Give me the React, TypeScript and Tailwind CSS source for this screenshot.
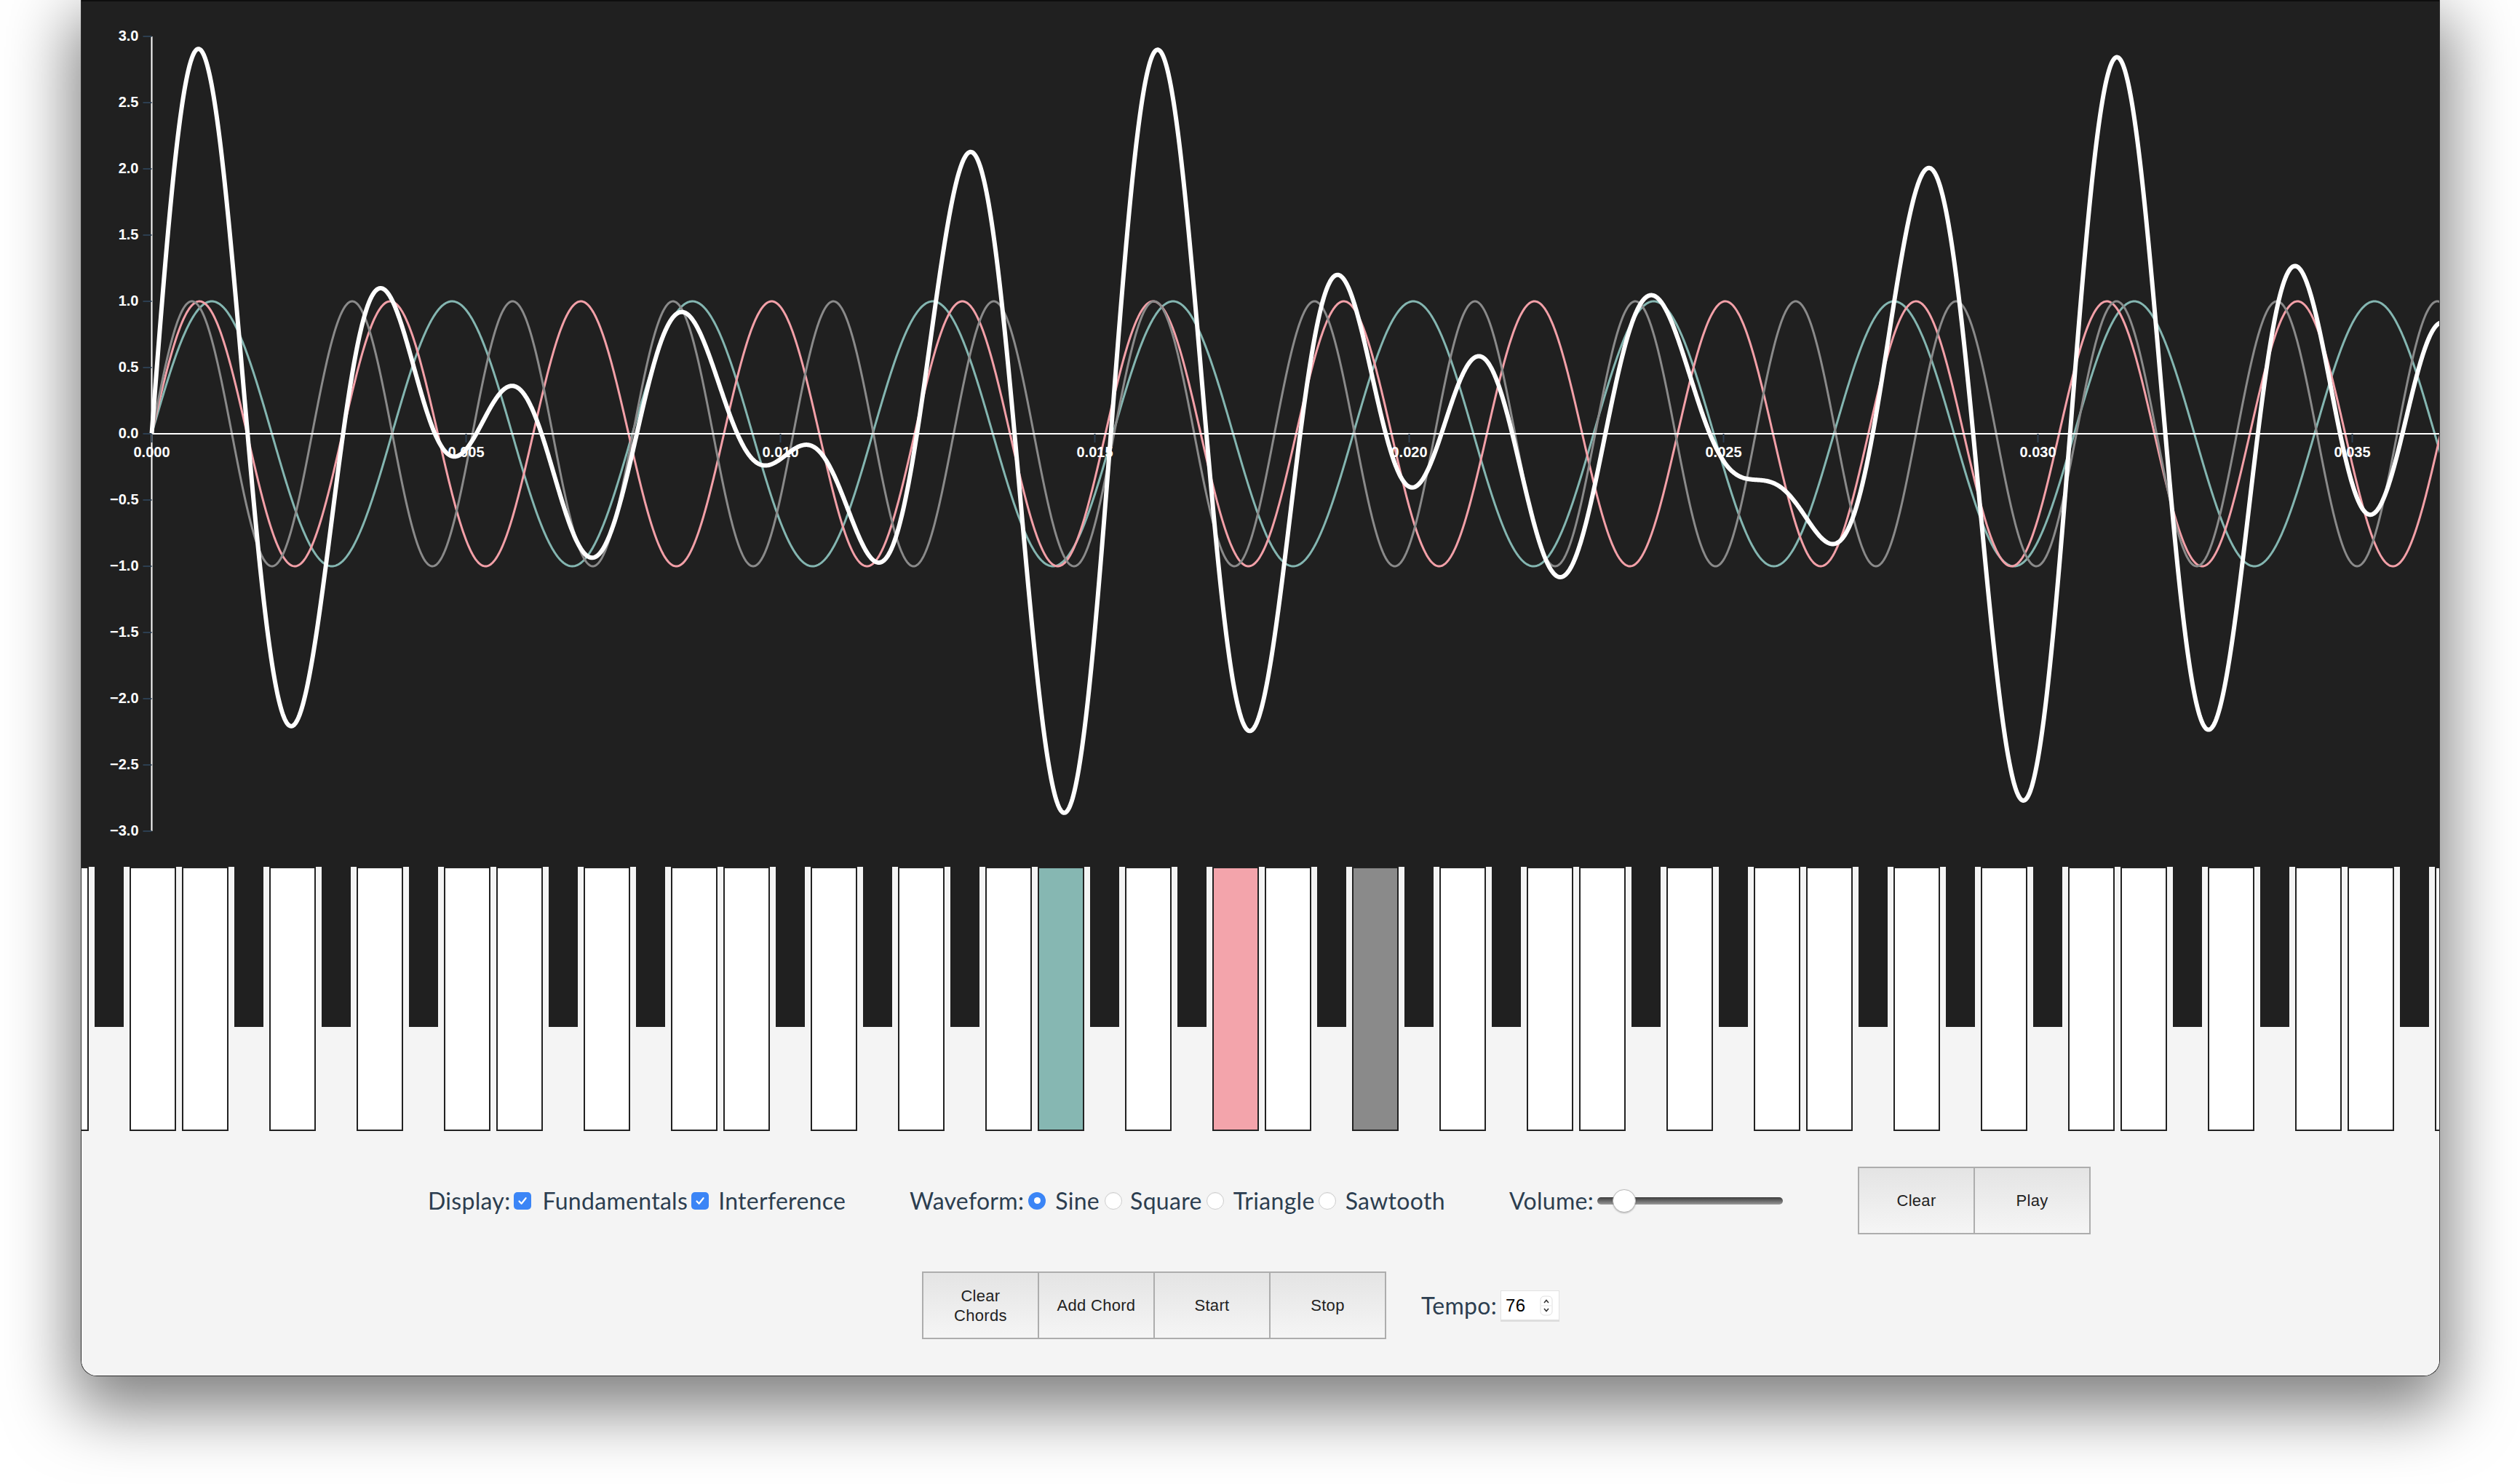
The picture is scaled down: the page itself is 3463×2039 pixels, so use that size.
import React from "react";

// chord being shown: C4, E4, G4
const NOTES = [
  { freq: 261.63, color: "#84b6b1" },
  { freq: 329.63, color: "#f3a0a8" },
  { freq: 392.0, color: "#8a8a8a" },
];

const CHART_W = 3240;
const CHART_H = 1191;
const X0 = 96.5;
const Y0 = 596;
const PX_PER_SEC = 86400;
const PX_PER_UNIT = 182;

const toX = (t: number) => X0 + t * PX_PER_SEC;
const toY = (v: number) => Y0 - v * PX_PER_UNIT;

const buildPath = (fn: (t: number) => number) => {
  let d = "";
  for (let px = 0; px <= CHART_W - X0 + 4; px += 1) {
    const t = px / PX_PER_SEC;
    d += `${px === 0 ? "M" : "L"}${(X0 + px).toFixed(1)},${toY(fn(t)).toFixed(2)}`;
  }
  return d;
};

const sine = (f: number) => (t: number) => Math.sin(2 * Math.PI * f * t);

const yTicks = Array.from({ length: 13 }, (_, i) => 3 - i * 0.5);
const xTicks = [0, 0.005, 0.01, 0.015, 0.02, 0.025, 0.03, 0.035];

const fmtY = (v: number) => (v < 0 ? "\u2212" + Math.abs(v).toFixed(1) : v.toFixed(1));

const Chart = () => {
  const fundamentals = NOTES.map((n) => buildPath(sine(n.freq)));
  const interference = buildPath((t) =>
    NOTES.reduce((sum, n) => sum + Math.sin(2 * Math.PI * n.freq * t), 0)
  );

  return (
    <svg width={CHART_W} height={CHART_H} className="block bg-[#202020]">
      <rect x={0} y={0} width={CHART_W} height={2} fill="#0e0e0e" />
      {fundamentals.map((d, i) => (
        <path key={i} d={d} fill="none" stroke={NOTES[i].color} strokeWidth={3} />
      ))}
      <path
        d={interference}
        fill="none"
        stroke="#ffffff"
        strokeWidth={6}
        strokeLinejoin="round"
      />

      {/* y axis */}
      <line x1={X0} y1={toY(3)} x2={X0} y2={toY(-3)} stroke="#fff" strokeWidth={2} />
      {yTicks.map((v) => (
        <g key={v}>
          <line x1={X0 - 12} y1={toY(v)} x2={X0} y2={toY(v)} stroke="#2c3e50" strokeWidth={2} />
          <text
            x={X0 - 18}
            y={toY(v)}
            dy="0.32em"
            textAnchor="end"
            fill="#fff"
            fontSize={20}
            fontWeight="bold"
            fontFamily="'Liberation Sans', Arial, sans-serif"
          >
            {fmtY(v)}
          </text>
        </g>
      ))}

      {/* x axis */}
      <line x1={X0} y1={Y0} x2={CHART_W} y2={Y0} stroke="#fff" strokeWidth={2} />
      {xTicks.map((t) => (
        <g key={t}>
          <line x1={toX(t)} y1={Y0} x2={toX(t)} y2={Y0 + 12} stroke="#2c3e50" strokeWidth={2} />
          <text
            x={toX(t)}
            y={Y0 + 18}
            dy="0.71em"
            textAnchor="middle"
            fill="#fff"
            fontSize={20}
            fontWeight="bold"
            fontFamily="'Liberation Sans', Arial, sans-serif"
          >
            {t.toFixed(3)}
          </text>
        </g>
      ))}
    </svg>
  );
};

type Key = { black: boolean; note: string };

const OCTAVE: Key[] = [
  { note: "C", black: false },
  { note: "C#", black: true },
  { note: "D", black: false },
  { note: "D#", black: true },
  { note: "E", black: false },
  { note: "F", black: false },
  { note: "F#", black: true },
  { note: "G", black: false },
  { note: "G#", black: true },
  { note: "A", black: false },
  { note: "A#", black: true },
  { note: "B", black: false },
];

const active: Record<string, string> = {
  "2-C": "bg-[#86b7b2]",
  "2-E": "bg-[#f3a4ab]",
  "2-G": "bg-[#8a8a8a]",
};

const Keyboard = () => {
  const keys = [0, 1, 2, 3, 4].flatMap((oct) =>
    OCTAVE.map((k) => ({ ...k, id: `${oct}-${k.note}` }))
  );
  return (
    <div className="h-[363px] bg-[#f4f4f4] overflow-hidden">
      <div className="flex items-start gap-[8px] -ml-[174px]">
        {keys.map((k) =>
          k.black ? (
            <div key={k.id} className="shrink-0 w-[40px] h-[220px] bg-[#202020]" />
          ) : (
            <div
              key={k.id}
              className={`shrink-0 w-[64px] h-[363px] border-2 border-[#222] ${
                active[k.id] ?? "bg-white"
              }`}
            />
          )
        )}
      </div>
    </div>
  );
};

const Check = () => (
  <span className="shrink-0 w-[24px] h-[24px] rounded-[5px] bg-[#3b85f6] flex items-center justify-center">
    <svg width="16" height="16" viewBox="0 0 16 16">
      <path d="M3.5 8.5 L6.6 11.8 L12.6 4.2" fill="none" stroke="#fff" strokeWidth="2.2" strokeLinecap="round" strokeLinejoin="round" />
    </svg>
  </span>
);

const Radio = ({ on }: { on?: boolean }) =>
  on ? (
    <span className="shrink-0 w-[24px] h-[24px] rounded-full bg-[#3b85f6] flex items-center justify-center">
      <span className="block w-[9px] h-[9px] rounded-full bg-white" />
    </span>
  ) : (
    <span className="block shrink-0 w-[24px] h-[24px] rounded-full bg-white border border-[#cdcdcd] shadow-[inset_0_1px_1px_rgba(0,0,0,0.06)]" />
  );

const Btn = ({ children, first }: { children: React.ReactNode; first?: boolean }) => (
  <button
    className={`w-[161px] h-[93px] shrink-0 border-2 border-[#adadad] bg-linear-to-b from-[#e4e4e4] to-[#f5f5f5] text-[22px] leading-[27px] text-[#222] font-['Liberation_Sans',Arial,sans-serif] px-[20px] ${
      first ? "" : "-ml-[2px]"
    }`}
  >
    {children}
  </button>
);

const Controls = () => (
  <div className="h-[336px] bg-[#f4f4f4] pt-[49px] text-[#2c3e50] text-[32px] tracking-[0.3px] font-['Lato','Open_Sans',sans-serif]">
    <div className="flex items-center justify-center h-[93px] pr-[3px]">
      <div className="w-[565px] flex items-center">
        <span>Display:</span>
        <span className="ml-[5px]"><Check /></span>
        <span className="ml-[15px]">Fundamentals</span>
        <span className="ml-[5px]"><Check /></span>
        <span className="ml-[13px]">Interference</span>
      </div>
      <div className="w-[727px] ml-[97px] flex items-center">
        <span>Waveform:</span>
        <span className="ml-[6px]"><Radio on /></span>
        <span className="ml-[13px]">Sine</span>
        <span className="ml-[7px]"><Radio /></span>
        <span className="ml-[11px]">Square</span>
        <span className="ml-[6px]"><Radio /></span>
        <span className="ml-[13px]">Triangle</span>
        <span className="ml-[5px]"><Radio /></span>
        <span className="ml-[13px]">Sawtooth</span>
      </div>
      <div className="w-[376px] ml-[97px] flex items-center">
        <span>Volume:</span>
        <div className="relative ml-[5px] w-[258px] h-[32px] flex items-center">
          <div className="w-full h-[10px] rounded-full bg-linear-to-b from-[#3c3c3c] to-[#9a9a9a]" />
          <div className="absolute left-[21px] top-0 w-[32px] h-[32px] rounded-full bg-white border border-[#b9b9b9] shadow-[0_1px_2px_rgba(0,0,0,0.25)]" />
        </div>
      </div>
      <div className="ml-[103px] flex">
        <Btn first>Clear</Btn>
        <Btn>Play</Btn>
      </div>
    </div>

    <div className="flex items-center justify-center h-[93px] mt-[51px] pr-[54px]">
      <div className="flex">
        <Btn first>Clear Chords</Btn>
        <Btn>Add Chord</Btn>
        <Btn>Start</Btn>
        <Btn>Stop</Btn>
      </div>
      <div className="ml-[48px] flex items-center">
        <span>Tempo:</span>
        <div className="ml-[5px] w-[81px] h-[41px] bg-white border border-[#e2e2e2] shadow-[0_2px_0_#dcdcdc] flex items-center pl-[6px] pr-[8px]">
          <span className="text-[24px] text-black font-['Liberation_Sans',Arial,sans-serif]">76</span>
          <svg className="ml-auto" width="18" height="28" viewBox="0 0 18 28">
            <rect x="1" y="1" width="16" height="26" rx="5" fill="#fff" stroke="#e0e0e0" />
            <line x1="2" y1="14" x2="16" y2="14" stroke="#e6e6e6" />
            <path d="M6 10 L9 6.5 L12 10" fill="none" stroke="#333" strokeWidth="1.6" />
            <path d="M6 18 L9 21.5 L12 18" fill="none" stroke="#333" strokeWidth="1.6" />
          </svg>
        </div>
      </div>
    </div>
  </div>
);

const App = () => {
  return (
    <div className="w-[3463px] h-[2039px] bg-white overflow-hidden">
      <div className="ml-[111px] w-[3242px] border-x border-b border-[#2e2e2e] rounded-b-[22px] overflow-hidden bg-[#f4f4f4] shadow-[0_34px_90px_12px_rgba(0,0,0,0.5)]">
        <Chart />
        <Keyboard />
        <Controls />
      </div>
    </div>
  );
};

export default App;
